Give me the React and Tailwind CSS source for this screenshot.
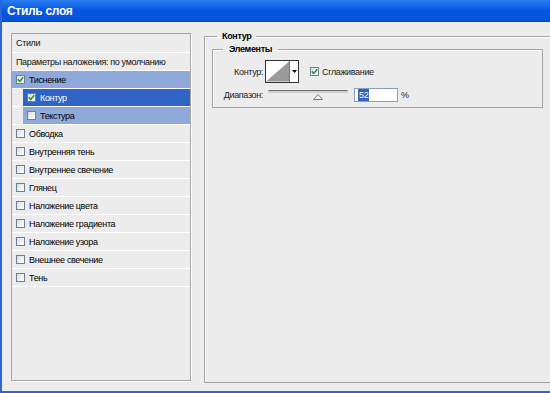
import React from 'react';

const effects = [
  { label: 'Обводка' },
  { label: 'Внутренняя тень' },
  { label: 'Внутреннее свечение' },
  { label: 'Глянец' },
  { label: 'Наложение цвета' },
  { label: 'Наложение градиента' },
  { label: 'Наложение узора' },
  { label: 'Внешнее свечение' },
  { label: 'Тень' },
];

const Checkbox = ({ checked }) => (
  <span className="flex h-[9px] w-[9px] shrink-0 items-center justify-center border border-[#6d7f98] bg-gradient-to-br from-[#dcdcd6] to-white">
    {checked && (
      <svg viewBox="0 0 7 7" className="h-[7px] w-[7px]">
        <path d="M0.8 3.4 L2.8 5.4 L6.2 1.2" stroke="#1f9a1f" strokeWidth="1.6" fill="none" />
      </svg>
    )}
  </span>
);

const StyleRow = ({ label, checked, tone, indent }) => {
  const toneClass =
    tone === 'dark'
      ? 'bg-[#3063c6] text-white'
      : tone === 'light'
      ? 'bg-[#8fa9da] text-black'
      : 'text-black';

  return (
    <div className={`flex h-[18px] border-b border-white ${indent ? 'pl-[11px]' : ''}`}>
      <div className={`flex flex-1 items-center gap-[4px] pl-[4px] ${toneClass}`}>
        <Checkbox checked={checked} />
        <span className="whitespace-nowrap">{label}</span>
      </div>
    </div>
  );
};

const Legend = ({ children, className }) => (
  <legend className={`font-bold leading-[12px] text-black ${className}`}>{children}</legend>
);

const App = () => {
  return (
    <div className="h-[393px] w-[550px] overflow-hidden border-b-2 border-l-2 border-[#2f63d9] bg-[#ececec] font-['Liberation_Sans',Arial,sans-serif] text-[9px] leading-[12px] tracking-[-0.35px] text-[#111]">
      {/* Title bar */}
      <div className="flex h-[22px] items-center border-b border-[#0a3fb5] bg-gradient-to-b from-[#2a7cf0] via-[#0457e3] to-[#0652da] pl-[5px]">
        <span className="text-[12px] font-bold tracking-[-0.3px] text-white">Стиль слоя</span>
      </div>

      <div className="flex items-start pl-[9px] pt-[8px]">
        {/* Styles list */}
        <div className="mr-[13px] mt-[3px] flex h-[348px] w-[180px] shrink-0 flex-col border border-[#a4a4a4] shadow-[1px_1px_0_#fff]">
          <div className="flex h-[19px] items-center border-b border-white pl-[4px]">Стили</div>
          <div className="flex h-[18px] items-center whitespace-nowrap border-b border-white pl-[4px]">
            Параметры наложения: по умолчанию
          </div>
          <StyleRow label="Тиснение" checked tone="light" />
          <StyleRow label="Контур" checked tone="dark" indent />
          <StyleRow label="Текстура" tone="light" indent />
          {effects.map((e) => (
            <StyleRow key={e.label} label={e.label} />
          ))}
        </div>

        {/* Contour settings */}
        <fieldset className="h-[353px] w-[380px] shrink-0 border border-[#a4a4a4] pl-[7px] shadow-[inset_1px_1px_0_#fff]">
          <Legend className="ml-[5px] px-[5px]">Контур</Legend>

          <fieldset className="mt-[1px] w-[331px] border border-[#a4a4a4] pb-[5px] pl-[8px] pt-[5px] shadow-[inset_1px_1px_0_#fff]">
            <Legend className="ml-[2px] px-[6px]">Элементы</Legend>

            <div className="flex h-[23px] items-center">
              <span className="w-[42px] text-right text-[#222]">Контур:</span>
              <div className="ml-[2px] flex h-[23px] border border-[#333]">
                <svg viewBox="0 0 24 21" className="h-[21px] w-[23px] bg-white">
                  <polygon points="0,21 24,0 24,21" fill="#9a9a9a" />
                </svg>
                <div className="flex w-[9px] items-center justify-center border-l border-[#777] bg-white">
                  <svg viewBox="0 0 5 3" className="h-[3px] w-[5px]">
                    <polygon points="0,0 5,0 2.5,3" fill="#000" />
                  </svg>
                </div>
              </div>
              <div className="ml-[11px] flex items-center gap-[3px]">
                <Checkbox checked />
                <span className="text-[#222]">Сглаживание</span>
              </div>
            </div>

            <div className="mt-[5px] flex h-[14px] items-start">
              <span className="mt-[1px] w-[42px] text-right text-[#222]">Диапазон:</span>
              <div className="ml-[5px] mt-[2px] flex w-[80px] flex-col">
                <div className="h-[3px] rounded-full border-t border-[#6f6f6f] bg-[#cfcfcf]"></div>
                <svg viewBox="0 0 10 6" className="ml-[45px] mt-[1px] h-[6px] w-[10px]">
                  <polygon points="5,0.5 9.5,5.5 0.5,5.5" fill="#f4f4f4" stroke="#7a7a7a" strokeWidth="1" />
                </svg>
              </div>
              <div className="ml-[6px] flex h-[14px] w-[44px] items-center border border-[#8aa0bd] bg-white pl-[3px]">
                <span className="bg-[#3163c5] px-[1px] text-white">52</span>
              </div>
              <span className="ml-[3px] mt-[1px] text-[#222]">%</span>
            </div>
          </fieldset>
        </fieldset>
      </div>
    </div>
  );
};

export default App;
